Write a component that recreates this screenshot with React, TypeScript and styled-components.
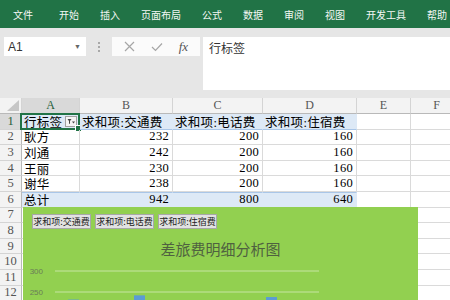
import React from 'react';
import styled, { createGlobalStyle, css } from 'styled-components';

const GlobalStyle = createGlobalStyle`
  html, body {
    margin: 0;
    padding: 0;
  }
  body {
    width: 450px;
    height: 300px;
    overflow: hidden;
    background: #e6e6e6;
    font-family: "Noto Sans CJK SC", sans-serif;
  }
`;

const Ribbon = styled.div`
  height: 28px;
  background: #217346;
  display: flex;
  align-items: center;
  padding-left: 13px;
  gap: 21px;
`;

const Tab = styled.div<{ $extra?: number }>`
  color: #f4f8f5;
  font-size: 10px;
  line-height: 1;
  white-space: nowrap;
  margin-right: ${p => p.$extra || 0}px;
  padding-top: 1px;
`;

const FormulaArea = styled.div`
  height: 70px;
  box-sizing: border-box;
  padding: 9px 0 0 4px;
  display: flex;
  align-items: flex-start;
`;

const NameBox = styled.div`
  width: 82px;
  height: 19px;
  box-sizing: border-box;
  background: #ffffff;
  display: flex;
  align-items: center;
  justify-content: space-between;
  padding: 0 5px 0 4px;
  font-family: "Liberation Sans", sans-serif;
  font-size: 12px;
  color: #333;
`;

const Caret = styled.span`
  font-size: 7px;
  color: #666;
`;

const Grip = styled.div`
  width: 26px;
  height: 19px;
  display: flex;
  flex-direction: column;
  align-items: center;
  justify-content: center;
  gap: 2px;
`;

const GripDot = styled.span`
  width: 2px;
  height: 2px;
  background: #a8a8a8;
`;

const EditButtons = styled.div`
  width: 88px;
  height: 19px;
  background: #fbfbfb;
  display: flex;
  align-items: center;
  justify-content: space-around;
  padding: 0 4px;
  box-sizing: border-box;
`;

const Fx = styled.span`
  font-family: "Liberation Serif", serif;
  font-style: italic;
  font-size: 13px;
  color: #555;
`;

const FormulaInput = styled.div`
  margin-left: 3px;
  flex: 1;
  height: 53px;
  background: #ffffff;
  box-sizing: border-box;
  padding: 2px 6px;
  font-size: 12px;
  color: #333;
`;

const Sheet = styled.div`
  position: relative;
  display: grid;
  grid-template-columns: 22px 58px 93px 90px 94px 54px 52px;
  grid-template-rows: 16px repeat(12, 15.6px);
  width: 463px;
  background: #ffffff;
`;

const ColHead = styled.div<{ $active?: boolean }>`
  background: ${p => (p.$active ? '#d9d9d9' : '#f3f3f3')};
  border-right: 1px solid #d4d4d4;
  border-bottom: 1px solid ${p => (p.$active ? '#217346' : '#b9b9b9')};
  box-sizing: border-box;
  display: flex;
  align-items: center;
  justify-content: center;
  font-family: "Liberation Serif", serif;
  font-size: 12px;
  color: ${p => (p.$active ? '#1e5e39' : '#555')};
`;

const Corner = styled.div`
  background: #f3f3f3;
  border-right: 1px solid #d4d4d4;
  border-bottom: 1px solid #b9b9b9;
  box-sizing: border-box;
  position: relative;
  &::after {
    content: '';
    position: absolute;
    right: 2px;
    bottom: 2px;
    border-left: 12px solid transparent;
    border-bottom: 11px solid #c6c6c6;
  }
`;

const RowHead = styled.div<{ $active?: boolean }>`
  background: ${p => (p.$active ? '#d9d9d9' : '#f3f3f3')};
  border-right: 1px solid ${p => (p.$active ? '#217346' : '#b9b9b9')};
  border-bottom: 1px solid #d4d4d4;
  box-sizing: border-box;
  display: flex;
  align-items: center;
  justify-content: center;
  font-family: "Liberation Serif", serif;
  font-size: 12.5px;
  color: ${p => (p.$active ? '#1e5e39' : '#555')};
`;

const Cell = styled.div<{ $num?: boolean; $band?: 'head' | 'total' }>`
  position: relative;
  box-sizing: border-box;
  border-right: 1px solid #dadada;
  border-bottom: 1px solid #dadada;
  display: flex;
  align-items: center;
  justify-content: ${p => (p.$num ? 'flex-end' : 'flex-start')};
  padding: 0 3px 0 2px;
  white-space: nowrap;
  overflow: visible;
  font-family: "Liberation Serif", "Noto Sans CJK SC", serif;
  font-size: 12.5px;
  letter-spacing: 0.3px;
  color: #000;
  ${p =>
    p.$band &&
    css`
      background: #dde9f6;
      border-right-color: #dde9f6;
    `}
  ${p =>
    p.$band === 'head' &&
    css`
      border-bottom-color: #a9c6e8;
    `}
  ${p =>
    p.$band === 'total' &&
    css`
      border-top: 1px solid #a9c6e8;
    `}
`;

const Selected = styled.div`
  position: absolute;
  inset: -1px -1px -1px -2px;
  border: 2px solid #217346;
  pointer-events: none;
  &::after {
    content: '';
    position: absolute;
    right: -4px;
    bottom: -4px;
    width: 5px;
    height: 5px;
    background: #217346;
    border: 1px solid #fff;
  }
`;

const FilterButton = styled.div`
  position: absolute;
  right: 2px;
  top: 2px;
  width: 12px;
  height: 11px;
  box-sizing: border-box;
  background: #f4f4f4;
  border: 1px solid #a0a0a0;
  display: flex;
  align-items: center;
  justify-content: center;
`;

const Chart = styled.div`
  position: absolute;
  left: 23px;
  top: 109px;
  width: 395px;
  height: 200px;
  background: #92d050;
  overflow: hidden;
`;

const FieldRow = styled.div`
  display: flex;
  gap: 4px;
  padding: 7px 0 0 9px;
`;

const FieldButton = styled.div`
  height: 15px;
  width: 59px;
  box-sizing: border-box;
  background: #e2e2e2;
  border: 1px solid #a8a8a8;
  display: flex;
  align-items: center;
  justify-content: center;
  font-size: 9px;
  color: #222;
  white-space: nowrap;
`;

const ChartTitle = styled.div`
  margin-top: 12px;
  text-align: center;
  font-size: 15px;
  line-height: 16px;
  color: #4f6140;
`;

const Plot = styled.svg`
  display: block;
  margin-top: 3px;
`;

const tabs = ['文件', '开始', '插入', '页面布局', '公式', '数据', '审阅', '视图', '开发工具', '帮助'];
const cols = ['A', 'B', 'C', 'D', 'E', 'F'];

const rows: { label: string; values: number[]; band?: 'total' }[] = [
  { label: '耿方', values: [232, 200, 160] },
  { label: '刘通', values: [242, 200, 160] },
  { label: '王丽', values: [230, 200, 160] },
  { label: '谢华', values: [238, 200, 160] },
  { label: '总计', values: [942, 800, 640], band: 'total' },
];

const seriesColors = ['#5b9bd5', '#ed7d31', '#a5a5a5'];
const yOf = (v: number) => 11 + (300 - v) * 0.42;

const App: React.FC = () => {
  const people = rows.slice(0, 4);

  return (
    <>
      <GlobalStyle />
      <Ribbon>
        {tabs.map((t, i) => (
          <Tab key={t} $extra={i === 0 ? 5 : 0}>
            {t}
          </Tab>
        ))}
      </Ribbon>

      <FormulaArea>
        <NameBox>
          A1
          <Caret>▼</Caret>
        </NameBox>
        <Grip>
          <GripDot />
          <GripDot />
          <GripDot />
        </Grip>
        <EditButtons>
          <svg width="11" height="11" viewBox="0 0 11 11">
            <path d="M1 1 L10 10 M10 1 L1 10" stroke="#a6a6a6" strokeWidth="1.2" />
          </svg>
          <svg width="12" height="10" viewBox="0 0 12 10">
            <path d="M1 5 L4.5 8.5 L11 1.5" stroke="#a6a6a6" strokeWidth="1.2" fill="none" />
          </svg>
          <Fx>fx</Fx>
        </EditButtons>
        <FormulaInput>行标签</FormulaInput>
      </FormulaArea>

      <Sheet>
        <Corner />
        {cols.map(c => (
          <ColHead key={c} $active={c === 'A'}>
            {c}
          </ColHead>
        ))}

        <RowHead $active>1</RowHead>
        <Cell $band="head">
          行标签
          <FilterButton>
            <svg width="8" height="7" viewBox="0 0 8 7">
              <path d="M0.5 1 L4.5 1 L3 3 L3 5.5 L2 6 L2 3 Z" fill="#444" />
              <path d="M5 3.5 L8 3.5 L6.5 5.5 Z" fill="#444" />
            </svg>
          </FilterButton>
          <Selected />
        </Cell>
        <Cell $band="head">求和项:交通费</Cell>
        <Cell $band="head">求和项:电话费</Cell>
        <Cell $band="head">求和项:住宿费</Cell>
        <Cell />
        <Cell />

        {rows.map((r, i) => (
          <React.Fragment key={r.label}>
            <RowHead>{i + 2}</RowHead>
            <Cell $band={r.band}>{r.label}</Cell>
            {r.values.map((v, j) => (
              <Cell key={j} $num $band={r.band}>
                {v}
              </Cell>
            ))}
            <Cell />
            <Cell />
          </React.Fragment>
        ))}

        {[7, 8, 9, 10, 11, 12].map(n => (
          <React.Fragment key={n}>
            <RowHead>{n}</RowHead>
            {cols.map(c => (
              <Cell key={c} />
            ))}
          </React.Fragment>
        ))}

        <Chart>
          <FieldRow>
            <FieldButton>求和项:交通费</FieldButton>
            <FieldButton>求和项:电话费</FieldButton>
            <FieldButton>求和项:住宿费</FieldButton>
          </FieldRow>
          <ChartTitle>差旅费明细分析图</ChartTitle>
          <Plot width="395" height="40" viewBox="0 0 395 40">
            {[300, 250].map(v => (
              <g key={v}>
                <line x1="32" x2="296" y1={yOf(v)} y2={yOf(v)} stroke="#c6e5a2" strokeWidth="1" />
                <text
                  x="20"
                  y={yOf(v) + 3}
                  textAnchor="end"
                  fontSize="8"
                  fontFamily="Liberation Sans, sans-serif"
                  fill="#6a7d58"
                >
                  {v}
                </text>
              </g>
            ))}
            {people.map((p, i) =>
              p.values.map((v, j) => (
                <rect
                  key={`${i}-${j}`}
                  x={32 + 66 * i + 13 + j * 14}
                  y={yOf(v)}
                  width="11"
                  height={Math.max(0, 40 - yOf(v))}
                  fill={seriesColors[j]}
                />
              ))
            )}
          </Plot>
        </Chart>
      </Sheet>
    </>
  );
};

export default App;
